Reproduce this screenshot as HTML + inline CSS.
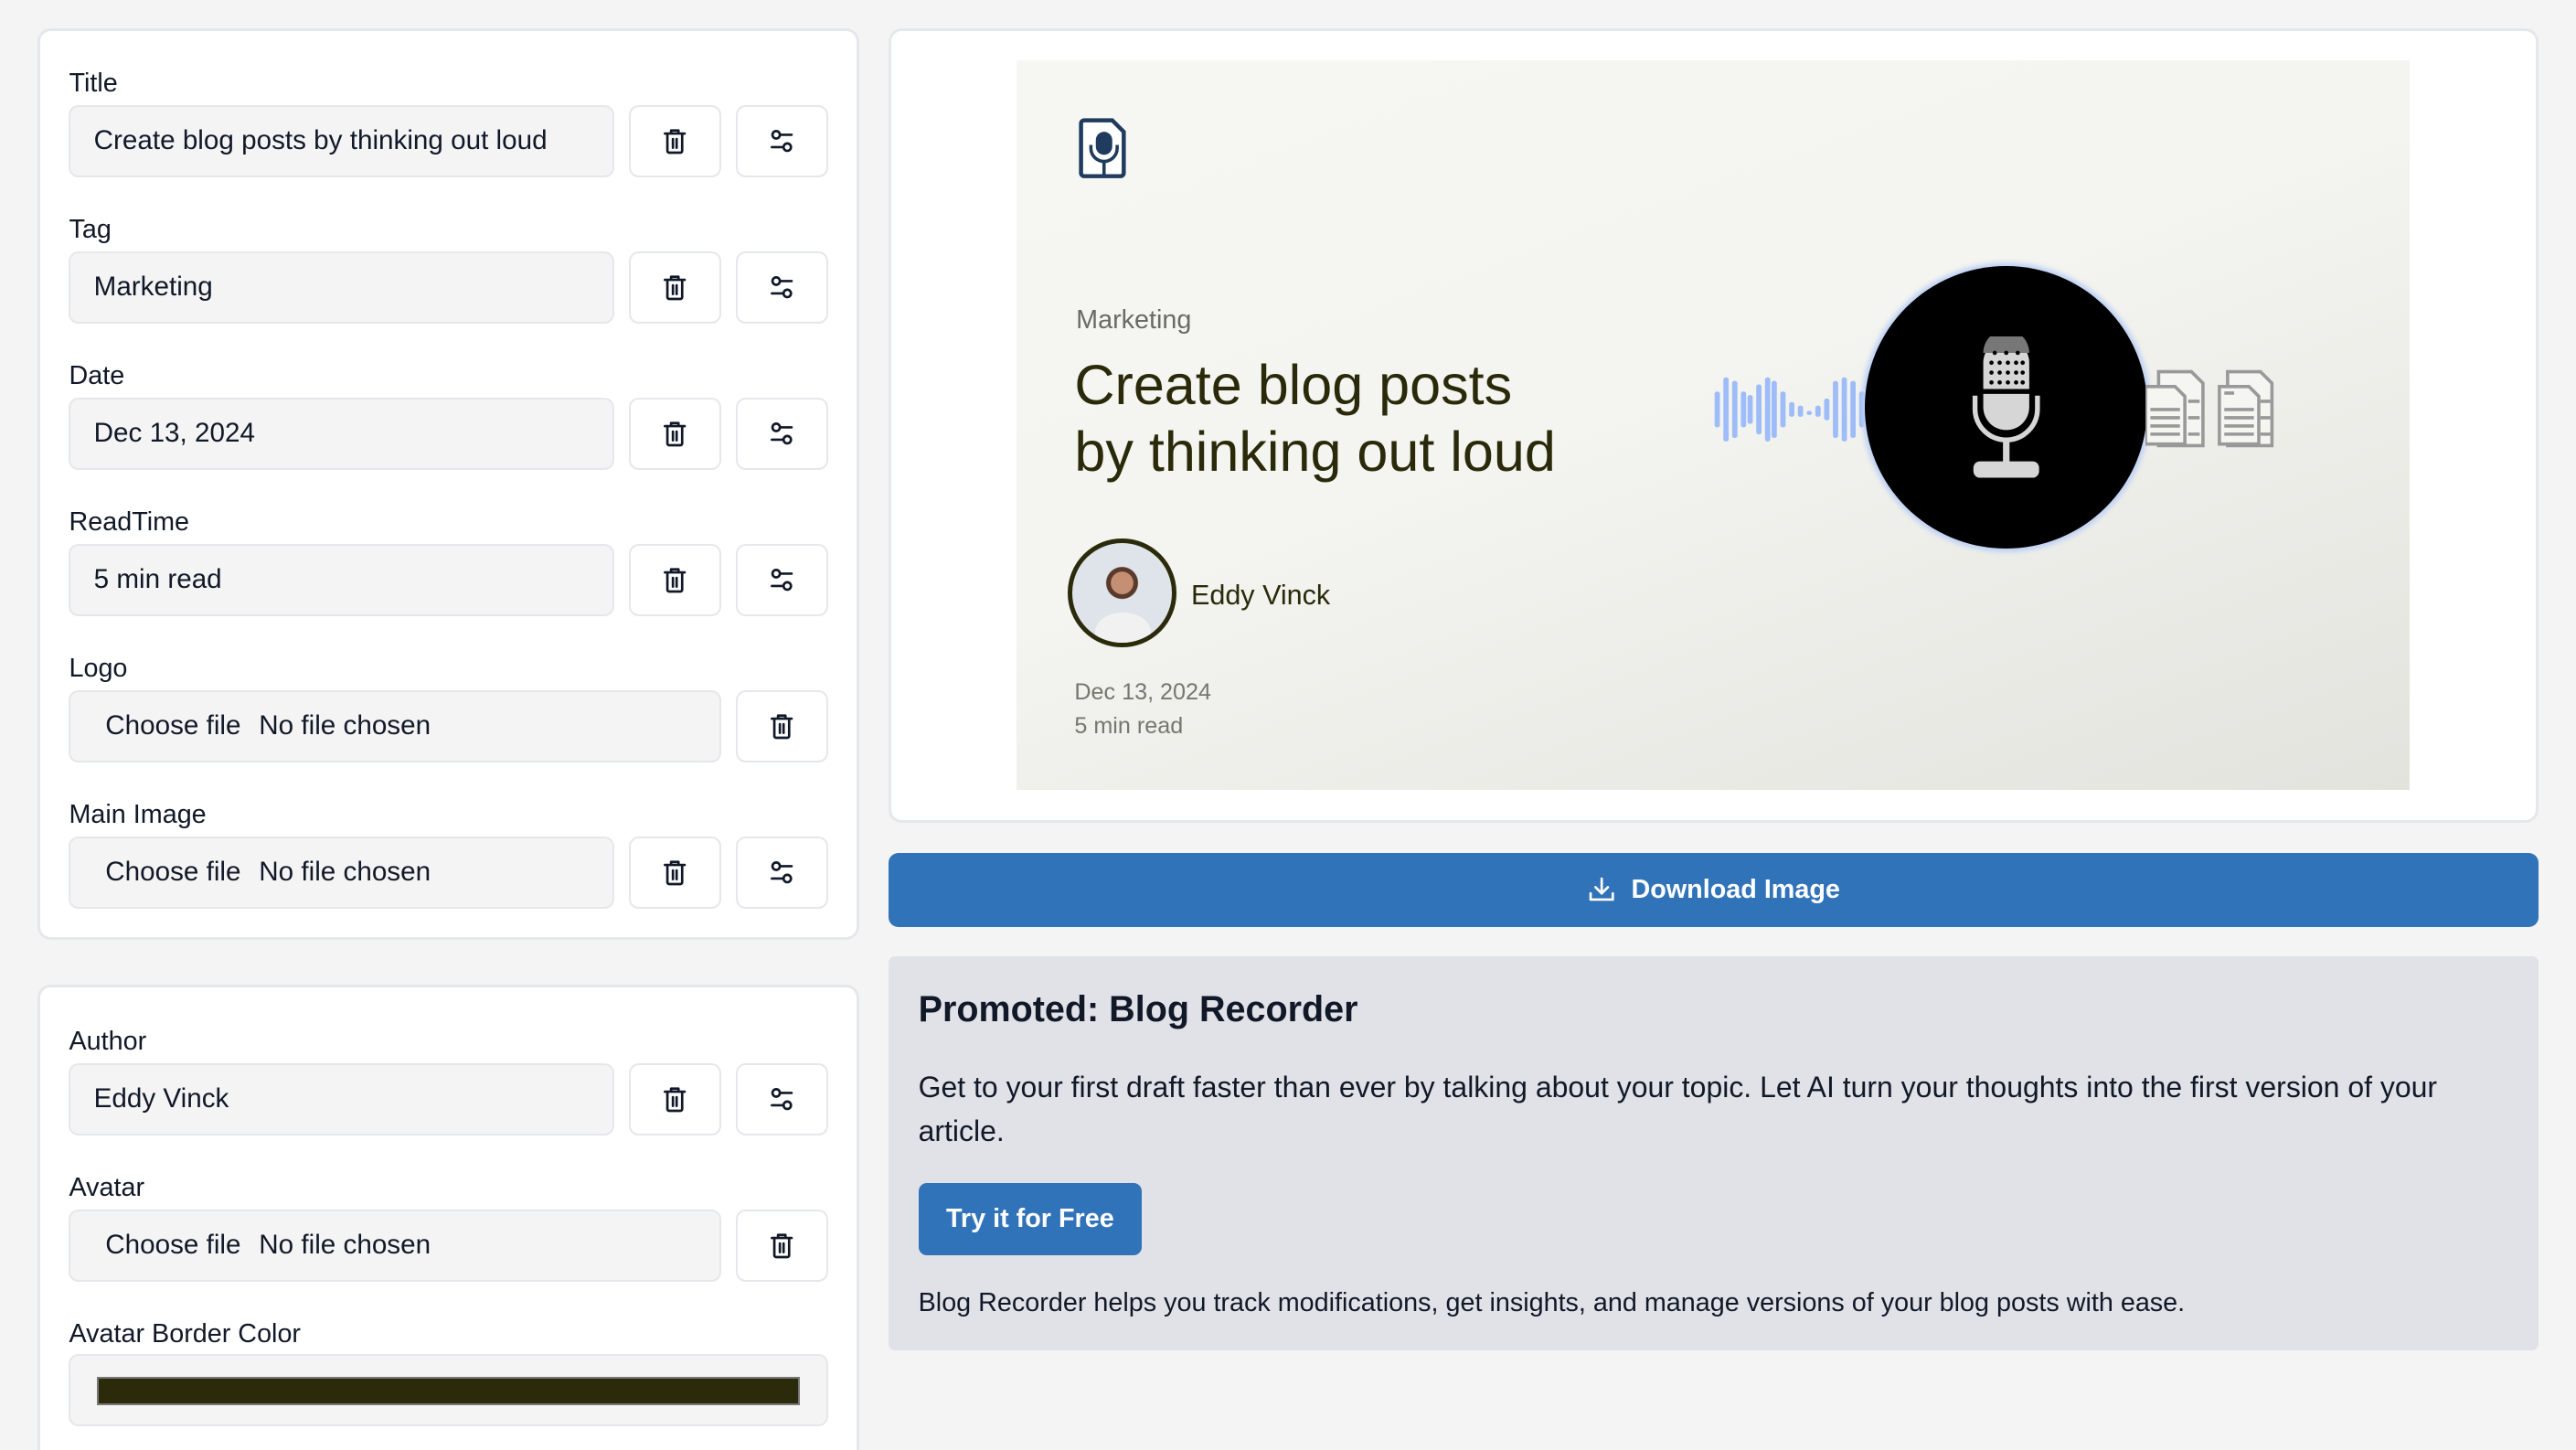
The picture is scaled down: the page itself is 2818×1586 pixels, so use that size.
<!DOCTYPE html>
<html><head><meta charset="utf-8">
<style>
*{box-sizing:border-box;margin:0;padding:0}
html,body{width:2818px;height:1586px;overflow:hidden;background:#f4f4f5}
.z{zoom:1.79719;position:relative;width:1568px;height:883px;font-family:"Liberation Sans",sans-serif;color:#111827}
.a{position:absolute}
.card{position:absolute;background:#fff;border:2px solid #e5e7eb;border-radius:8px}
.lbl{position:absolute;left:42px;font-size:16px;color:#111827;top:0}
.inp{position:absolute;left:42px;height:44px;background:#f4f4f5;border:1.5px solid #e5e7eb;border-radius:6px;font-size:16.5px;line-height:41px;padding-left:14px;color:#111827}
.btn{position:absolute;width:56px;height:44px;background:#fff;border:1.5px solid #e5e7eb;border-radius:6px;display:flex;align-items:center;justify-content:center}
.file b{font-weight:normal;margin-left:7px;margin-right:11px}
</style></head><body>
<div class="z">
<svg width="0" height="0" style="position:absolute">
<defs>
<symbol id="tr" viewBox="0 0 24 24"><g fill="none" stroke="#111827" stroke-width="2" stroke-linecap="round" stroke-linejoin="round"><path d="M4 6h16M9 6V3.5h6V6M6 6v14a1.5 1.5 0 0 0 1.5 1.5h9A1.5 1.5 0 0 0 18 20V6M10.5 10.5v7M13.5 10.5v7"/></g></symbol>
<symbol id="sl" viewBox="0 0 24 24"><g fill="none" stroke="#111827" stroke-width="2" stroke-linecap="round"><path d="M11 7h9M4 17h9"/><circle cx="7.5" cy="7" r="3"/><circle cx="16.5" cy="17" r="3"/></g></symbol>
</defs></svg>

<div class="card" style="left:23px;top:17px;width:500px;height:555px"></div>
<div class="card" style="left:23px;top:599px;width:500px;height:300px"></div>

<div class="lbl" style="top:42px">Title</div>
<div class="inp" style="top:64px;width:332px">Create blog posts by thinking out loud</div>
<div class="btn" style="left:383px;top:64px"><svg width="18" height="18"><use href="#tr"/></svg></div>
<div class="btn" style="left:448px;top:64px"><svg width="18" height="18"><use href="#sl"/></svg></div>

<div class="lbl" style="top:131px">Tag</div>
<div class="inp" style="top:153px;width:332px">Marketing</div>
<div class="btn" style="left:383px;top:153px"><svg width="18" height="18"><use href="#tr"/></svg></div>
<div class="btn" style="left:448px;top:153px"><svg width="18" height="18"><use href="#sl"/></svg></div>

<div class="lbl" style="top:220px">Date</div>
<div class="inp" style="top:242px;width:332px">Dec 13, 2024</div>
<div class="btn" style="left:383px;top:242px"><svg width="18" height="18"><use href="#tr"/></svg></div>
<div class="btn" style="left:448px;top:242px"><svg width="18" height="18"><use href="#sl"/></svg></div>

<div class="lbl" style="top:309px">ReadTime</div>
<div class="inp" style="top:331px;width:332px">5 min read</div>
<div class="btn" style="left:383px;top:331px"><svg width="18" height="18"><use href="#tr"/></svg></div>
<div class="btn" style="left:448px;top:331px"><svg width="18" height="18"><use href="#sl"/></svg></div>

<div class="lbl" style="top:398px">Logo</div>
<div class="inp file" style="top:420px;width:397px"><b>Choose file</b>No file chosen</div>
<div class="btn" style="left:448px;top:420px"><svg width="18" height="18"><use href="#tr"/></svg></div>

<div class="lbl" style="top:487px">Main Image</div>
<div class="inp file" style="top:509px;width:332px"><b>Choose file</b>No file chosen</div>
<div class="btn" style="left:383px;top:509px"><svg width="18" height="18"><use href="#tr"/></svg></div>
<div class="btn" style="left:448px;top:509px"><svg width="18" height="18"><use href="#sl"/></svg></div>

<div class="lbl" style="top:625px">Author</div>
<div class="inp" style="top:647px;width:332px">Eddy Vinck</div>
<div class="btn" style="left:383px;top:647px"><svg width="18" height="18"><use href="#tr"/></svg></div>
<div class="btn" style="left:448px;top:647px"><svg width="18" height="18"><use href="#sl"/></svg></div>

<div class="lbl" style="top:714px">Avatar</div>
<div class="inp file" style="top:736px;width:397px"><b>Choose file</b>No file chosen</div>
<div class="btn" style="left:448px;top:736px"><svg width="18" height="18"><use href="#tr"/></svg></div>

<div class="lbl" style="top:803px">Avatar Border Color</div>
<div class="inp" style="top:824px;width:462px;padding:0"><div class="a" style="left:16px;top:13px;width:428px;height:17px;background:#2b2a0b;border:1.5px solid #777"></div></div>

<!-- preview card -->
<div class="card" style="left:541px;top:17px;width:1004px;height:484px"></div>
<div class="a" style="left:619px;top:37px;width:848px;height:444px;background:linear-gradient(160deg,#f6f6f2 0%,#f4f4f0 45%,#e3e3de 100%)"></div>
<svg class="a" style="left:656px;top:71px" width="32" height="38" viewBox="0 0 32 38">
<path d="M4 2h17l7 7v25a2 2 0 0 1-2 2H4a2 2 0 0 1-2-2V4a2 2 0 0 1 2-2z" fill="#fff" stroke="#1f3b5e" stroke-width="2.5"/>
<rect x="11" y="9" width="10" height="14" rx="5" fill="#1f3b5e"/>
<path d="M8 17v2a8 8 0 0 0 16 0v-2M16 27v8" fill="none" stroke="#1f3b5e" stroke-width="2"/>
</svg>
<div class="a" style="left:655px;top:186px;font-size:16px;color:#6b6b66">Marketing</div>
<div class="a" style="left:654px;top:214px;font-size:34px;line-height:41px;color:#2a2a0b">Create blog posts<br>by thinking out loud</div>
<div class="a" style="left:650px;top:328px;width:66px;height:66px;border-radius:50%;border:3px solid #2b2a0b;background:radial-gradient(circle at 50% 40%,#c58f74 0 14%,#5a3a2a 15% 20%,#dfe4ea 21% 100%);overflow:hidden">
<div class="a" style="left:14px;top:42px;width:34px;height:24px;border-radius:50% 50% 0 0;background:#f1f1f1"></div></div>
<div class="a" style="left:725px;top:353px;font-size:17px;color:#2a2a0b">Eddy Vinck</div>
<div class="a" style="left:654px;top:411px;font-size:14px;line-height:21px;color:#77776f">Dec 13, 2024<br>5 min read</div>

<svg class="a" style="left:1040px;top:218px" width="96" height="60" viewBox="0 0 72 56" preserveAspectRatio="none">
<g stroke="#9dbcf8" stroke-width="2.4" stroke-linecap="round">
<path d="M4 20v18M8 12v34M12 14v30M16 20v18M19 22v14M23 16v26M27 12v34M30 14v30M34 20v18M38 26v6M42 28v4M46 31v0M50 28v4M54 24v10M58 14v30M62 12v34M66 14v30M70 20v18"/>
</g></svg>
<div class="a" style="left:1135px;top:162px;width:172px;height:172px;border-radius:50%;background:#000;box-shadow:0 0 3px 2px #bcd0f5"></div>
<svg class="a" style="left:1195px;top:205px" width="54" height="90" viewBox="0 0 54 90">
<path d="M12 32V16a14 14 0 0 1 28 0v16z" fill="#d6d6d6"/>
<path d="M12 10a14 14 0 0 1 28 0z" fill="#777"/>
<g fill="#000"><circle cx="19" cy="10" r="1.3"/><circle cx="26" cy="10" r="1.3"/><circle cx="33" cy="10" r="1.3"/>
<circle cx="17" cy="16" r="1.3"/><circle cx="22" cy="16" r="1.3"/><circle cx="27" cy="16" r="1.3"/><circle cx="32" cy="16" r="1.3"/><circle cx="36" cy="16" r="1.3"/>
<circle cx="17" cy="22" r="1.3"/><circle cx="22" cy="22" r="1.3"/><circle cx="27" cy="22" r="1.3"/><circle cx="32" cy="22" r="1.3"/><circle cx="36" cy="22" r="1.3"/>
<circle cx="17" cy="28" r="1.3"/><circle cx="22" cy="28" r="1.3"/><circle cx="27" cy="28" r="1.3"/><circle cx="32" cy="28" r="1.3"/><circle cx="36" cy="28" r="1.3"/></g>
<path d="M12 35h28v8a14 14 0 0 1-28 0z" fill="#d6d6d6"/>
<path d="M7 36v8a19 19 0 0 0 38 0v-8" fill="none" stroke="#d6d6d6" stroke-width="3"/>
<path d="M26 62v16" stroke="#d6d6d6" stroke-width="4"/>
<rect x="6" y="76" width="40" height="10" rx="4" fill="#d6d6d6"/>
</svg>
<svg class="a" style="left:1306px;top:224px" width="92" height="50">
<g fill="#f5f5f2" stroke="#999" stroke-width="2">
<path d="M8 2h20l7 7v38H8z"/><path d="M0 11h18l6 6v29H0z"/>
<path d="M50 2h20l7 7v38H50z"/><path d="M45 11h18l6 6v29H45z"/></g>
<g stroke="#999" stroke-width="2"><path d="M3 25h18M3 30h18M3 35h18M3 40h18M26 20h7M26 30h7M26 40h7M48 15h6M48 25h18M48 30h18M48 35h18M48 40h18M70 20h6M70 30h6M70 40h6"/></g>
</svg>

<!-- download -->
<div class="a" style="left:541px;top:519px;width:1004px;height:45px;background:#3173b8;border-radius:6px;color:#fff;font-size:16px;font-weight:bold;display:flex;align-items:center;justify-content:center">
<svg width="18" height="18" viewBox="0 0 24 24" style="margin-right:9px"><g fill="none" stroke="#fff" stroke-width="2" stroke-linecap="round" stroke-linejoin="round"><path d="M12 3v12M7 10l5 5 5-5M3 15v5h18v-5"/></g></svg>Download Image</div>

<!-- promo -->
<div class="a" style="left:541px;top:582px;width:1004px;height:240px;background:#e0e2e7;border-radius:4px"></div>
<div class="a" style="left:559px;top:602px;font-size:22px;font-weight:bold;color:#111827">Promoted: Blog Recorder</div>
<div class="a" style="left:559px;top:648px;width:965px;font-size:17.8px;line-height:27px;color:#111827">Get to your first draft faster than ever by talking about your topic. Let AI turn your thoughts into the first version of your article.</div>
<div class="a" style="left:559px;top:720px;width:136px;height:44px;background:#3173b8;border-radius:5px;color:#fff;font-size:16px;font-weight:bold;line-height:44px;text-align:center">Try it for Free</div>
<div class="a" style="left:559px;top:784px;font-size:16px;color:#111827">Blog Recorder helps you track modifications, get insights, and manage versions of your blog posts with ease.</div>
</div>
</body></html>
